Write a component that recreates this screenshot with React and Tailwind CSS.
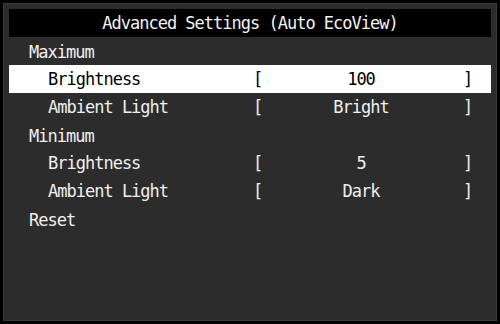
export default function App() {
  const rows = [
    { type: "head", label: "Maximum" },
    { type: "item", label: "Brightness", value: "100", selected: true },
    { type: "item", label: "Ambient Light", value: "Bright" },
    { type: "head", label: "Minimum" },
    { type: "item", label: "Brightness", value: "5" },
    { type: "item", label: "Ambient Light", value: "Dark" },
    { type: "head", label: "Reset" },
  ];
  return (
    <div
      className="w-[500px] h-[324px] bg-black p-[3px] text-[17px] tracking-[-1px]"
      style={{ fontFamily: '"DejaVu Sans Mono", "Liberation Mono", monospace' }}
    >
      <div className="h-full bg-[#2c2c2c] border border-[#3a3a3a] px-[5px] pt-[5px] flex flex-col">
        <div className="h-[28px] bg-black text-[#f2f2f2] flex items-center justify-center pt-[1px]">
          Advanced Settings (Auto EcoView)
        </div>
        <div className="flex flex-col">
          {rows.map((r, i) =>
            r.type === "head" ? (
              <div
                key={i}
                className="h-[28px] flex items-center pl-[20px] pt-[3px] text-[#f0f0f0]"
              >
                {r.label}
              </div>
            ) : (
              <div
                key={i}
                className={
                  "h-[28px] flex items-center pt-[2px] " +
                  (r.selected ? "bg-white text-black" : "text-[#f0f0f0]")
                }
              >
                <div className="w-[244px] pl-[39px]">{r.label}</div>
                <div className="w-[6px]">[</div>
                <div className="flex-1 text-center">{r.value}</div>
                <div className="w-[6px]">]</div>
                <div className="w-[22px]" />
              </div>
            )
          )}
        </div>
      </div>
    </div>
  );
}
